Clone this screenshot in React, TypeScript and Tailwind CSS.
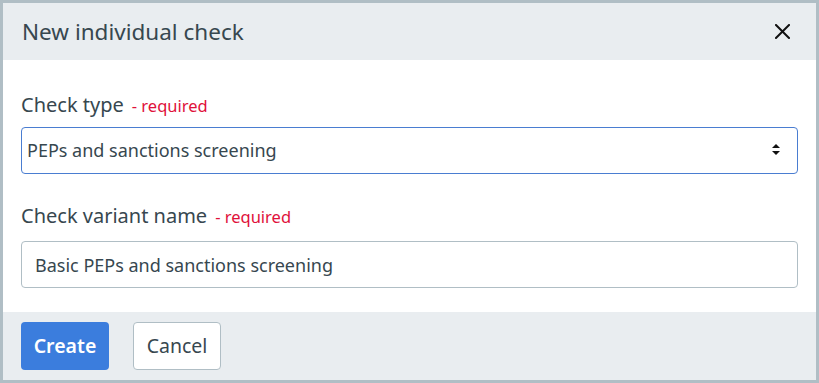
import { useState } from 'react';

const RequiredLabel: React.FC<{ text: string }> = ({ text }) => (
  <div className="flex h-[24px] items-baseline gap-[8px] leading-[24px] text-[#37474f]">
    <span className="text-[20px]">{text}</span>
    <span className="text-[16.5px] text-[#e0103a]">- required</span>
  </div>
);

export default function App() {
  const [checkType, setCheckType] = useState('PEPs and sanctions screening');
  const [variantName, setVariantName] = useState(
    'Basic PEPs and sanctions screening',
  );

  return (
    <div
      className="flex h-[383px] w-[819px] flex-col border-[3px] border-[#b0bec5] bg-white"
      style={{ fontFamily: '"Noto Sans", "Open Sans", sans-serif' }}
    >
      {/* header */}
      <div className="flex h-[57px] shrink-0 items-center justify-between bg-[#e9edf0] pl-[19px] pr-[26px]">
        <h1 className="text-[22.5px] leading-[30px] text-[#37474f]">
          New individual check
        </h1>
        <button className="flex h-[15px] w-[15px] items-center justify-center">
          <svg width="15" height="15" viewBox="0 0 15 15">
            <path
              d="M1 1 L14 14 M14 1 L1 14"
              stroke="#111"
              strokeWidth="2"
              strokeLinecap="square"
            />
          </svg>
        </button>
      </div>

      {/* body */}
      <div className="flex flex-1 flex-col px-[18px] pt-[33px]">
        <RequiredLabel text="Check type" />
        <div className="relative mt-[10px]">
          <select
            className="h-[47px] w-full appearance-none rounded-[4px] border border-[#4a7dd1] bg-white pl-[5px] text-[18px] text-[#37474f] outline-none"
            value={checkType}
            onChange={(e) => setCheckType(e.target.value)}
          >
            <option>PEPs and sanctions screening</option>
            <option>Identity verification</option>
          </select>
          <svg
            className="pointer-events-none absolute right-[18px] top-[17px]"
            width="8"
            height="11"
            viewBox="0 0 8 11"
          >
            <path d="M4 0 L8 4 L0 4 Z M0 7 L8 7 L4 11 Z" fill="#111" />
          </svg>
        </div>

        <div className="mt-[30px]">
          <RequiredLabel text="Check variant name" />
        </div>
        <input
          className="mt-[13px] h-[47px] w-full rounded-[4px] border border-[#b0bec5] bg-white px-[13px] text-[18px] text-[#37474f] outline-none"
          value={variantName}
          onChange={(e) => setVariantName(e.target.value)}
        />
      </div>

      {/* footer */}
      <div className="flex h-[68px] shrink-0 items-center gap-[24px] bg-[#e9edf0] px-[18px]">
        <button className="h-[48px] w-[88px] rounded-[4px] bg-[#3b7ddd] text-[19.5px] font-semibold text-white">
          Create
        </button>
        <button className="h-[48px] w-[88px] rounded-[4px] border border-[#b0bec5] bg-white text-[19.5px] text-[#37474f]">
          Cancel
        </button>
      </div>
    </div>
  );
}
